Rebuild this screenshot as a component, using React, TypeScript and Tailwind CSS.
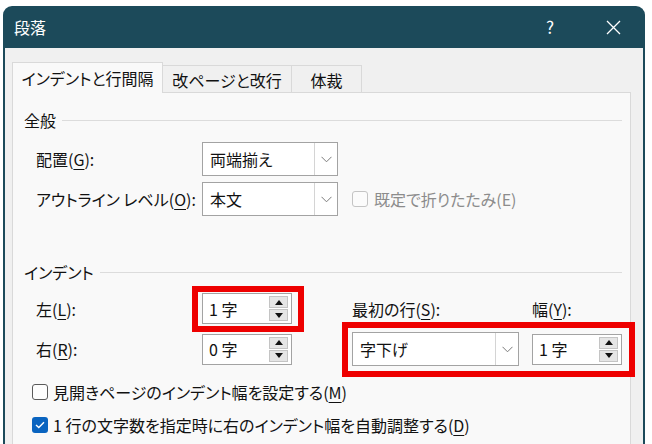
import React from "react";

const U = ({ children }: { children: React.ReactNode }) => (
  <span className="underline underline-offset-[3px] decoration-1">{children}</span>
);

const Chevron = () => (
  <svg width="11" height="7" viewBox="0 0 11 7" fill="none">
    <path d="M0.5 0.8 L5.5 5.8 L10.5 0.8" stroke="#7a7a7a" strokeWidth="1" />
  </svg>
);

const Select = ({ value, width }: { value: string; width: string }) => (
  <div className={`${width} h-[34px] flex bg-white border border-[#a3a3a3]`}>
    <div className="flex-1 flex items-center pl-[7px] text-[16px] text-[#111]">{value}</div>
    <div className="w-[23px] flex items-center justify-center border-l border-[#d4d4d4]">
      <Chevron />
    </div>
  </div>
);

const Tri = ({ up }: { up?: boolean }) => (
  <svg width="8" height="5" viewBox="0 0 8 5">
    <path d={up ? "M0 5 L4 0 L8 5 Z" : "M0 0 L4 5 L8 0 Z"} fill="#111" />
  </svg>
);

const Spin = ({ value }: { value: string }) => (
  <div className="w-[90px] h-[31px] flex items-center bg-white border border-[#a3a3a3]">
    <div className="flex-1 pl-[6px] text-[16px] text-[#111]">{value}</div>
    <div className="w-[19px] mr-[3px] flex flex-col gap-[1px]">
      <div className="h-[12px] flex items-center justify-center bg-[#e5e5e5] border border-[#c4c4c4]">
        <Tri up />
      </div>
      <div className="h-[12px] flex items-center justify-center bg-[#e5e5e5] border border-[#c4c4c4]">
        <Tri />
      </div>
    </div>
  </div>
);

const Group = ({ title }: { title: string }) => (
  <div className="flex items-center gap-[6px] h-[20px] pr-[8px]">
    <span className="text-[16px] text-[#111]">{title}</span>
    <div className="flex-1 h-px bg-[#dcdcdc]" />
  </div>
);

export default function App() {
  return (
    <div className="w-[652px] h-[444px] bg-white overflow-hidden font-['Noto_Sans_CJK_JP','Noto_Sans',sans-serif] [font-feature-settings:'palt']">
      <div className="ml-[3px] mt-[6px] w-[642px] h-[460px] rounded-t-[9px] bg-[#1c4a5a] flex flex-col px-[2px]">
        {/* title bar */}
        <div className="h-[42px] flex items-center pl-[9px] text-white shrink-0">
          <span className="text-[16px]">段落</span>
          <span className="ml-auto mr-[52px] text-[17px]">?</span>
          <svg width="15" height="15" viewBox="0 0 15 15" className="mr-[22px]">
            <path d="M1 1 L14 14 M14 1 L1 14" stroke="white" strokeWidth="1.3" />
          </svg>
        </div>

        {/* body */}
        <div className="flex-1 bg-[#f0f0f0] pl-[7px] pr-[12px] pt-[14px]">
          {/* tabs */}
          <div className="flex items-end h-[31px] text-[16px] text-[#111]">
            <div className="h-[31px] w-[151px] flex items-center justify-center bg-[#f9f9f9] border border-b-0 border-[#d9d9d9] relative z-10">
              インデントと行間隔
            </div>
            <div className="h-[28px] w-[129px] flex items-center justify-center border-t border-r border-[#d9d9d9]">
              改ページと改行
            </div>
            <div className="h-[28px] w-[70px] flex items-center justify-center border-t border-r border-[#d9d9d9]">
              体裁
            </div>
          </div>

          {/* panel */}
          <div className="relative h-[400px] bg-[#f9f9f9] border border-[#d9d9d9] -mt-px pl-[11px] pt-[17px] text-[16px] text-[#111]">
            <Group title="全般" />

            <div className="pl-[12px] mt-[12px] flex flex-col gap-[6px]">
              <div className="flex items-center">
                <span className="w-[166px]">
                  配置(<U>G</U>):
                </span>
                <Select value="両端揃え" width="w-[136px]" />
              </div>
              <div className="flex items-center">
                <span className="w-[166px]">
                  アウトライン レベル(<U>O</U>):
                </span>
                <Select value="本文" width="w-[136px]" />
                <div className="ml-[14px] flex items-center gap-[6px] text-[#8c8c8c]">
                  <div className="w-[16px] h-[16px] rounded-[3px] border border-[#c4c4c4] bg-[#fbfbfb]" />
                  <span>既定で折りたたみ(E)</span>
                </div>
              </div>
            </div>

            <div className="mt-[46px]">
              <Group title="インデント" />
            </div>

            <div className="pl-[12px] mt-[11px] flex flex-col gap-[8px]">
              <div className="flex items-center h-[31px]">
                <span className="w-[166px]">
                  左(<U>L</U>):
                </span>
                <Spin value="1 字" />
                <span className="ml-[60px] w-[180px]">
                  最初の行(<U>S</U>):
                </span>
                <span>
                  幅(<U>Y</U>):
                </span>
              </div>
              <div className="flex items-center h-[34px]">
                <span className="w-[166px]">
                  右(<U>R</U>):
                </span>
                <Spin value="0 字" />
                <div className="ml-[60px]">
                  <Select value="字下げ" width="w-[167px]" />
                </div>
                <div className="ml-[13px]">
                  <Spin value="1 字" />
                </div>
              </div>
            </div>

            <div className="mt-[15px] pl-[8px] flex flex-col gap-[11px]">
              <div className="flex items-center gap-[5px] h-[22px]">
                <div className="w-[16px] h-[16px] rounded-[3px] border border-[#5a5a5a] bg-[#fdfdfd]" />
                <span>
                  見開きページのインデント幅を設定する(<U>M</U>)
                </span>
              </div>
              <div className="flex items-center gap-[5px] h-[22px]">
                <div className="w-[16px] h-[16px] rounded-[3px] bg-[#0a64c0] flex items-center justify-center">
                  <svg width="10" height="8" viewBox="0 0 10 8">
                    <path d="M1 4 L3.8 6.6 L9 1.2" stroke="white" strokeWidth="1.4" fill="none" />
                  </svg>
                </div>
                <span>
                  1 行の文字数を指定時に右のインデント幅を自動調整する(<U>D</U>)
                </span>
              </div>
            </div>

            {/* red annotation frames */}
            <div className="absolute left-[179px] top-[193px] w-[112px] h-[46px] border-[6px] border-[#ee0000] pointer-events-none" />
            <div className="absolute left-[329px] top-[229px] w-[293px] h-[55px] border-[6px] border-[#ee0000] pointer-events-none" />
          </div>
        </div>
      </div>
    </div>
  );
}
